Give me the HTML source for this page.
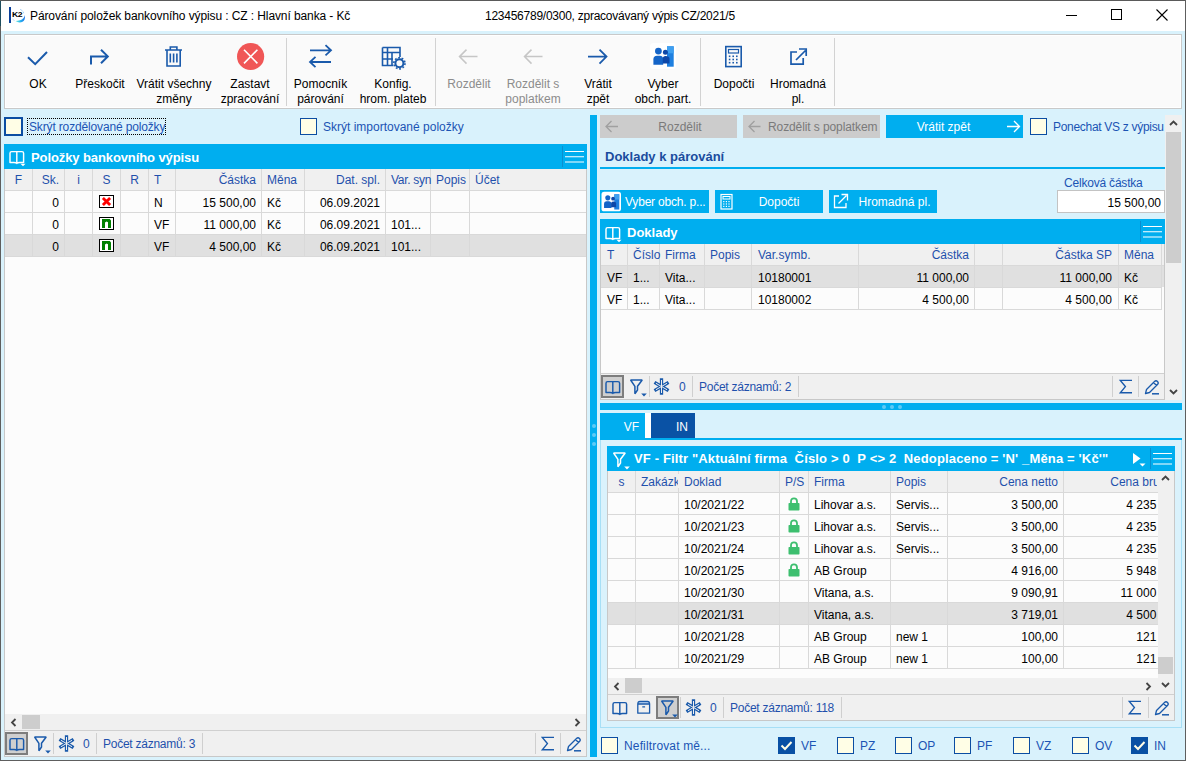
<!DOCTYPE html><html><head><meta charset="utf-8"><style>
*{box-sizing:border-box;margin:0;padding:0}
html,body{width:1186px;height:761px;overflow:hidden;background:#d9f2fc;font-family:"Liberation Sans",sans-serif;font-size:12px;color:#000}
.ab{position:absolute}
.t{position:absolute;white-space:nowrap;line-height:14px}
.c{text-align:center}
.r{text-align:right}
.hl{position:absolute;height:1px;background:#d6d6d6}
.vl{position:absolute;width:1px;background:#d6d6d6}
.cb{position:absolute;width:17px;height:17px;border:2px solid #0c4a9c;background:#fffde8}
.cbk{position:absolute;width:17px;height:17px;background:#0c4a9c}
svg{position:absolute;overflow:visible}
.bh{position:absolute;background:#00aeef;color:#fff;font-weight:bold;font-size:13px}
.gh{position:absolute;background:#f0f0f0;color:#1f4fa0}
.btn{position:absolute;background:#00aeef;color:#fff}
.gbtn{position:absolute;background:#cccccc;color:#7b7b7b}
</style></head><body><div class="ab" style="left:0;top:0;width:1186px;height:31px;background:#fff"></div><div class="ab" style="left:0;top:0;width:1186px;height:1px;background:#5a5a5a"></div><div class="ab" style="left:0;top:0;width:1px;height:761px;background:#5e5e5e"></div><div class="ab" style="left:0;top:1px;width:1px;height:25px;background:#1d4d5e"></div><div class="ab" style="left:1185px;top:0;width:1px;height:761px;background:#5e5e5e"></div><div class="ab" style="left:0;top:760px;width:1186px;height:1px;background:#5e5e5e"></div><div class="ab" style="left:9px;top:7px;width:2px;height:16px;background:#0a3f9a"></div><div class="t" style="left:12px;top:11px;font-size:7.5px;font-weight:bold;line-height:8px;letter-spacing:-0.4px;transform:scaleX(1.15);transform-origin:left">K2</div><svg style="left:0;top:0" width="1" height="1"><defs><linearGradient id="k2g" x1="0" y1="0" x2="1" y2="0"><stop offset="0" stop-color="#6ee8d8"/><stop offset="0.5" stop-color="#28b8f0"/><stop offset="1" stop-color="#1a6ee8"/></linearGradient></defs><path d="M15.5 21 Q19 23.5 23 21.5 Q25.3 20 25 15 Q24.2 19 20 20.2 Q17.5 20.8 15.5 21 Z" fill="url(#k2g)"/><path d="M20.5 9.5 Q23.5 11 23.8 14" stroke="#5aa8f0" stroke-width="0.9" stroke-dasharray="1 1" fill="none"/><path d="M12.5 19 Q13.5 20 14.5 20.5" stroke="#9ccff5" stroke-width="0.8" fill="none"/></svg><div class="t" style="left:30px;top:9px;font-size:12px;letter-spacing:-0.1px">Párování položek bankovního výpisu : CZ : Hlavní banka - Kč</div><div class="t" style="left:485px;top:9px;font-size:12px;letter-spacing:-0.25px">123456789/0300, zpracovávaný výpis CZ/2021/5</div><div class="ab" style="left:1066px;top:15px;width:11px;height:1px;background:#000"></div><div class="ab" style="left:1111px;top:9px;width:11px;height:11px;border:1px solid #000"></div><svg style="left:1156px;top:9px" width="12" height="12"><path d="M0.5 0.5 L11.5 11.5 M11.5 0.5 L0.5 11.5" stroke="#000" stroke-width="1.1"/></svg><div class="ab" style="left:4px;top:34px;width:1178px;height:75px;background:#fafafa;border:1px solid #c9c9c9;box-shadow:inset 0 0 0 1px #fff"></div><div class="ab" style="left:286px;top:38px;width:1px;height:68px;background:#d2d2d2"></div><div class="ab" style="left:435px;top:38px;width:1px;height:68px;background:#d2d2d2"></div><div class="ab" style="left:700px;top:38px;width:1px;height:68px;background:#d2d2d2"></div><div class="ab" style="left:834px;top:38px;width:1px;height:68px;background:#d2d2d2"></div><div class="t c" style="left:-22px;width:120px;top:77px;color:#000">OK</div><div class="t c" style="left:40px;width:120px;top:77px;color:#000">Přeskočit</div><div class="t c" style="left:114px;width:120px;top:77px;color:#000">Vrátit všechny</div><div class="t c" style="left:114px;width:120px;top:92px;color:#000">změny</div><div class="t c" style="left:190px;width:120px;top:77px;color:#000">Zastavt</div><div class="t c" style="left:190px;width:120px;top:92px;color:#000">zpracování</div><div class="t c" style="left:260.5px;width:120px;top:77px;color:#000">Pomocník</div><div class="t c" style="left:260.5px;width:120px;top:92px;color:#000">párování</div><div class="t c" style="left:333px;width:120px;top:77px;color:#000">Konfig.</div><div class="t c" style="left:333px;width:120px;top:92px;color:#000">hrom. plateb</div><div class="t c" style="left:409px;width:120px;top:77px;color:#8c8c8c">Rozdělit</div><div class="t c" style="left:473px;width:120px;top:77px;color:#8c8c8c">Rozdělit s</div><div class="t c" style="left:473px;width:120px;top:92px;color:#8c8c8c">poplatkem</div><div class="t c" style="left:538px;width:120px;top:77px;color:#000">Vrátit</div><div class="t c" style="left:538px;width:120px;top:92px;color:#000">zpět</div><div class="t c" style="left:603px;width:120px;top:77px;color:#000">Vyber</div><div class="t c" style="left:603px;width:120px;top:92px;color:#000">obch. part.</div><div class="t c" style="left:674px;width:120px;top:77px;color:#000">Dopočti</div><div class="t c" style="left:738px;width:120px;top:77px;color:#000">Hromadná</div><div class="t c" style="left:738px;width:120px;top:92px;color:#000">pl.</div><svg style="left:0;top:0" width="1" height="1"><path d="M28 57.3 L35.2 64.2 L47 52" stroke="#1a5aab" stroke-width="2" fill="none"/></svg><svg style="left:0;top:0" width="1" height="1"><path d="M91 64.5 L91 56.4 L108 56.4 M101 49.8 L107.8 56.4 L101 63.2" stroke="#1a5aab" stroke-width="2" fill="none"/></svg><svg style="left:0;top:0" width="1" height="1"><path d="M165 50 L182 50 M170.3 49.5 L170.3 47 L176.9 47 L176.9 49.5 M167 50 L167 66 L180.2 66 L180.2 50 M170.3 53.5 L170.3 62.5 M173.6 53.5 L173.6 62.5 M176.9 53.5 L176.9 62.5" stroke="#1a5aab" stroke-width="1.6" fill="none"/></svg><svg style="left:0;top:0" width="1" height="1"><circle cx="250.6" cy="56.5" r="13.6" fill="#f05656"/><path d="M244 49.8 L257.4 63.4 M257.4 49.8 L244 63.4" stroke="#fff" stroke-width="1.6"/></svg><svg style="left:0;top:0" width="1" height="1"><path d="M310 50.3 L331 50.3 M325.5 45.2 L331 50.3 L325.5 55.4 M310 62 L331 62 M315.5 56.9 L310 62 L315.5 67.1" stroke="#1a5aab" stroke-width="1.8" fill="none"/></svg><svg style="left:0;top:0" width="1" height="1"><path d="M382.5 47.5 L400 47.5 L400 57 M382.5 47.5 L382.5 65.5 L393 65.5 M382.5 52.5 L400 52.5 M382.5 59 L393 59 M387.5 47.5 L387.5 65.5 M392 52.5 L392 65.5" stroke="#1a5aab" stroke-width="1.6" fill="none"/><circle cx="399.4" cy="63.3" r="4" stroke="#1a5aab" stroke-width="2" fill="#fafafa"/><circle cx="399.4" cy="63.3" r="5.6" stroke="#1a5aab" stroke-width="1.6" stroke-dasharray="1.8 1.7" fill="none"/></svg><svg style="left:0;top:0" width="1" height="1"><path d="M477.5 56.6 L459.5 56.6 M466.5 49.6 L459.5 56.6 L466.5 63.6" stroke="#c6c6c6" stroke-width="1.5" fill="none"/></svg><svg style="left:0;top:0" width="1" height="1"><path d="M542.5 56.6 L524.5 56.6 M531.5 49.6 L524.5 56.6 L531.5 63.6" stroke="#c6c6c6" stroke-width="1.5" fill="none"/></svg><svg style="left:0;top:0" width="1" height="1"><path d="M588 56.6 L606.5 56.6 M599.5 49.6 L606.5 56.6 L599.5 63.6" stroke="#1a5aab" stroke-width="1.8" fill="none"/></svg><svg style="left:0;top:0" width="1" height="1"><g transform="translate(646,40) scale(1)"><rect x="4" y="3" width="26" height="26" rx="3.5" fill="#fff"/><rect x="21" y="6.3" width="6.7" height="20.4" fill="#1f80e0"/><rect x="21" y="6.3" width="6.7" height="7" fill="#3e9ff0"/><circle cx="12.4" cy="11.1" r="3.4" fill="#1565c8"/><path d="M7.4 24.8 L7.4 19.5 Q7.4 15.8 11 15.8 L13.8 15.8 Q17.2 15.8 17.2 19.5 L17.2 24.8 Z" fill="#1565c8"/><circle cx="19.4" cy="12.2" r="2.5" fill="#0d47a8"/><path d="M16.8 23.5 L16.8 18.8 Q16.8 16 19.5 16 Q23.5 16 23.5 18.8 L23.5 23.5 Z" fill="#0d47a8"/></g></svg><svg style="left:0;top:0" width="1" height="1"><rect x="725.8" y="46.6" width="15.4" height="20" stroke="#1a5aab" stroke-width="1.6" fill="none"/><rect x="728.5" y="49.5" width="10" height="3.5" stroke="#1a5aab" stroke-width="1.2" fill="none"/><rect x="728.8" y="55.5" width="1.6" height="1.6" fill="#1a5aab"/><rect x="728.8" y="58.7" width="1.6" height="1.6" fill="#1a5aab"/><rect x="728.8" y="61.9" width="1.6" height="1.6" fill="#1a5aab"/><rect x="732.4" y="55.5" width="1.6" height="1.6" fill="#1a5aab"/><rect x="732.4" y="58.7" width="1.6" height="1.6" fill="#1a5aab"/><rect x="732.4" y="61.9" width="1.6" height="1.6" fill="#1a5aab"/><rect x="736.0" y="55.5" width="1.6" height="1.6" fill="#1a5aab"/><rect x="736.0" y="58.7" width="1.6" height="1.6" fill="#1a5aab"/><rect x="736.0" y="61.9" width="1.6" height="1.6" fill="#1a5aab"/></svg><svg style="left:0;top:0" width="1" height="1"><path d="M797 52 L791 52 L791 64.2 L803.2 64.2 L803.2 58 M796 60 L805.5 50.5 M799 49 L806.2 49 L806.2 56" stroke="#1a5aab" stroke-width="1.7" fill="none"/></svg><div class="ab" style="left:4px;top:117px;width:19px;height:19px;border:2px solid #0b4da2;background:#fffee6"></div><div class="ab" style="left:27px;top:118px;width:139px;height:17px;border:1px dotted #000"></div><div class="t" style="left:29px;top:120px;color:#1b54b4;letter-spacing:-0.15px">Skrýt rozdělované položky</div><div class="ab" style="left:300px;top:118px;width:17px;height:17px;border:1px solid #0b4da2;background:#fffee6"></div><div class="t" style="left:323px;top:120px;color:#1b54b4">Skrýt importované položky</div><div class="ab" style="left:4px;top:144px;width:583px;height:613px;background:#fcfcfc;border:1px solid #c8c8c8;border-top:none"></div><div class="ab" style="left:4px;top:144px;width:583px;height:25px;background:#00aeef"></div><svg style="left:9px;top:150px" width="16" height="14"><path d="M7.8 13.2 L7.8 1.6 M7.8 1.6 L2.6 1.6 Q1 1.6 1 3.2 L1 12.4 L5 12.4 Q7 12.4 7.8 13.4 Q8.6 12.4 10.6 12.4 L14.6 12.4 L14.6 3.2 Q14.6 1.6 13 1.6 L7.8 1.6" stroke="#fff" stroke-width="1.45" fill="none" stroke-linejoin="round"/><path d="M11.5 13.8 L16.5 13.8 L14 16.3 Z" fill="#fff"/></svg><div class="t" style="left:31px;top:151px;color:#fff;font-weight:bold;font-size:13px;letter-spacing:-0.1px">Položky bankovního výpisu</div><div class="ab" style="left:562px;top:146px;width:1px;height:21px;background:#0a8fd0"></div><svg style="left:565px;top:150px" width="20" height="14"><path d="M0 1.5 L19 1.5 M0 6.75 L19 6.75 M0 12 L19 12" stroke="#fff" stroke-width="1.2"/></svg><div class="ab" style="left:5px;top:169px;width:581px;height:21px;background:#f0f0f0"></div><div class="ab" style="left:5px;top:190px;width:581px;height:1px;background:#d9d9d9"></div><div class="ab" style="left:5px;top:235px;width:581px;height:21px;background:#e0e0e0"></div><div class="ab" style="left:5px;top:212px;width:581px;height:1px;background:#d9d9d9"></div><div class="ab" style="left:5px;top:234px;width:581px;height:1px;background:#d9d9d9"></div><div class="ab" style="left:5px;top:256px;width:581px;height:1px;background:#d9d9d9"></div><div class="ab" style="left:32px;top:169px;width:1px;height:88px;background:#d9d9d9"></div><div class="ab" style="left:64px;top:169px;width:1px;height:88px;background:#d9d9d9"></div><div class="ab" style="left:92px;top:169px;width:1px;height:88px;background:#d9d9d9"></div><div class="ab" style="left:120px;top:169px;width:1px;height:88px;background:#d9d9d9"></div><div class="ab" style="left:148px;top:169px;width:1px;height:88px;background:#d9d9d9"></div><div class="ab" style="left:175px;top:169px;width:1px;height:88px;background:#d9d9d9"></div><div class="ab" style="left:261px;top:169px;width:1px;height:88px;background:#d9d9d9"></div><div class="ab" style="left:304px;top:169px;width:1px;height:88px;background:#d9d9d9"></div><div class="ab" style="left:385px;top:169px;width:1px;height:88px;background:#d9d9d9"></div><div class="ab" style="left:430px;top:169px;width:1px;height:88px;background:#d9d9d9"></div><div class="ab" style="left:469px;top:169px;width:1px;height:88px;background:#d9d9d9"></div><div class="t" style="left:5px;top:173px;width:27px;text-align:center;color:#1f50ac">F</div><div class="t" style="left:33px;top:173px;width:26px;text-align:right;color:#1f50ac">Sk.</div><div class="t" style="left:65px;top:173px;width:27px;text-align:center;color:#1f50ac">i</div><div class="t" style="left:93px;top:173px;width:27px;text-align:center;color:#1f50ac">S</div><div class="t" style="left:121px;top:173px;width:27px;text-align:center;color:#1f50ac">R</div><div class="t" style="left:154px;top:173px;color:#1f50ac">T</div><div class="t" style="left:176px;top:173px;width:80px;text-align:right;color:#1f50ac">Částka</div><div class="t" style="left:267px;top:173px;color:#1f50ac">Měna</div><div class="t" style="left:304px;top:173px;width:76px;text-align:right;color:#1f50ac">Dat. spl.</div><div class="t" style="left:391px;top:173px;color:#1f50ac;letter-spacing:-0.3px">Var. syn</div><div class="t" style="left:436px;top:173px;color:#1f50ac">Popis</div><div class="t" style="left:475px;top:173px;color:#1f50ac">Účet</div><div class="t" style="left:33px;top:196px;width:26px;text-align:right;">0</div><div class="ab" style="left:99px;top:195px;width:15px;height:13px;border:1px solid #000;background:#fff"></div><svg style="left:99px;top:195px" width="15" height="13"><path d="M3.9 2.9 L11.1 10.1 M11.1 2.9 L3.9 10.1" stroke="#ff0000" stroke-width="2.8"/></svg><div class="t" style="left:154px;top:196px;">N</div><div class="t" style="left:176px;top:196px;width:80px;text-align:right;">15 500,00</div><div class="t" style="left:267px;top:196px;">Kč</div><div class="t" style="left:304px;top:196px;width:76px;text-align:right;">06.09.2021</div><div class="t" style="left:391px;top:196px;"></div><div class="t" style="left:33px;top:218px;width:26px;text-align:right;">0</div><div class="ab" style="left:99px;top:217px;width:15px;height:13px;border:1px solid #000;background:#fff"></div><svg style="left:99px;top:217px" width="15" height="13"><path d="M3 2 L10.8 2 L12 3.4 L12 11 L9 11 L9 5.3 L7.6 4.6 L6 5.6 L6 11 L3 11 Z" fill="#008000"/></svg><div class="t" style="left:154px;top:218px;">VF</div><div class="t" style="left:176px;top:218px;width:80px;text-align:right;">11 000,00</div><div class="t" style="left:267px;top:218px;">Kč</div><div class="t" style="left:304px;top:218px;width:76px;text-align:right;">06.09.2021</div><div class="t" style="left:391px;top:218px;">101...</div><div class="t" style="left:33px;top:240px;width:26px;text-align:right;">0</div><div class="ab" style="left:99px;top:239px;width:15px;height:13px;border:1px solid #000;background:#fff"></div><svg style="left:99px;top:239px" width="15" height="13"><path d="M3 2 L10.8 2 L12 3.4 L12 11 L9 11 L9 5.3 L7.6 4.6 L6 5.6 L6 11 L3 11 Z" fill="#008000"/></svg><div class="t" style="left:154px;top:240px;">VF</div><div class="t" style="left:176px;top:240px;width:80px;text-align:right;">4 500,00</div><div class="t" style="left:267px;top:240px;">Kč</div><div class="t" style="left:304px;top:240px;width:76px;text-align:right;">06.09.2021</div><div class="t" style="left:391px;top:240px;">101...</div><div class="ab" style="left:5px;top:714px;width:581px;height:16px;background:#f0f0f0"></div><div class="ab" style="left:22px;top:715px;width:18px;height:14px;background:#cdcdcd"></div><svg style="left:10px;top:718px" width="7" height="9"><path d="M5.5 1 L2 4.5 L5.5 8" stroke="#444" stroke-width="1.8" fill="none"/></svg><svg style="left:574px;top:718px" width="7" height="9"><path d="M1.5 1 L5 4.5 L1.5 8" stroke="#444" stroke-width="1.8" fill="none"/></svg><div class="ab" style="left:5px;top:730px;width:581px;height:1px;background:#d0d0d0"></div><div class="ab" style="left:5px;top:731px;width:581px;height:25px;background:#f0f0f0"></div><div class="ab" style="left:5px;top:732px;width:23px;height:23px;background:#cfcfcf;border:2px solid #7d7d7d"></div><svg style="left:9px;top:737px" width="16" height="14"><path d="M7.8 13.2 L7.8 1.6 M7.8 1.6 L2.6 1.6 Q1 1.6 1 3.2 L1 12.4 L5 12.4 Q7 12.4 7.8 13.4 Q8.6 12.4 10.6 12.4 L14.6 12.4 L14.6 3.2 Q14.6 1.6 13 1.6 L7.8 1.6" stroke="#1a5aab" stroke-width="1.45" fill="none" stroke-linejoin="round"/></svg><svg style="left:33px;top:735px" width="18" height="19"><path d="M1.6 2 L13.2 2 L8.5 8.3 L8.5 12 L5.9 15.8 L5.9 8.3 Z" stroke="#1a5aab" stroke-width="1.5" fill="none" stroke-linejoin="bevel"/><path d="M12.2 15.5 L17.8 15.5 L15 18.5 Z" fill="#1a5aab"/></svg><div class="ab" style="left:53px;top:733px;width:1px;height:21px;background:#cfcfcf"></div><svg style="left:58px;top:735px" width="17" height="17"><path d="M8.5 2 L8.5 15 M2.9 5.25 L14.1 11.75 M14.1 5.25 L2.9 11.75" stroke="#1a5aab" stroke-width="3.3" stroke-linecap="square" fill="none"/><path d="M8.5 2 L8.5 15 M2.9 5.25 L14.1 11.75 M14.1 5.25 L2.9 11.75" stroke="#f0f0f0" stroke-width="1.0" stroke-linecap="butt" fill="none"/></svg><div class="t" style="left:83px;top:737px;color:#1f50ac">0</div><div class="ab" style="left:96px;top:733px;width:1px;height:21px;background:#cfcfcf"></div><div class="t" style="left:103px;top:737px;color:#1f50ac;letter-spacing:-0.25px">Počet záznamů: 3</div><div class="ab" style="left:202px;top:733px;width:1px;height:21px;background:#cfcfcf"></div><div class="ab" style="left:535px;top:733px;width:1px;height:21px;background:#cfcfcf"></div><svg style="left:541px;top:736px" width="14" height="16"><path d="M13 1.4 L1.3 1.4 L6.4 7.6 L1.3 13.8 L13 13.8" stroke="#1a5aab" stroke-width="1.4" fill="none"/></svg><div class="ab" style="left:560px;top:733px;width:1px;height:21px;background:#cfcfcf"></div><svg style="left:566px;top:736px" width="16" height="16"><path d="M1.5 14.5 L2.5 10.5 L10.5 2.5 Q12 1 13.5 2.5 Q15 4 13.5 5.5 L5.5 13.5 Z M9.5 3.5 L12.5 6.5" stroke="#1a5aab" stroke-width="1.3" fill="none" stroke-linejoin="round"/><path d="M8 14.8 L15 14.8" stroke="#1a5aab" stroke-width="1.5"/></svg><div class="ab" style="left:590px;top:115px;width:7px;height:642px;background:#00aeef"></div><div class="ab" style="left:600px;top:115px;width:137px;height:23px;background:#cccccc"></div><svg style="left:0;top:0" width="1" height="1"><path d="M618 126.5 L606 126.5 M611.5 121 L606 126.5 L611.5 132" stroke="#a0a0a0" stroke-width="1.3" fill="none"/></svg><div class="t" style="left:620px;top:120px;width:120px;text-align:center;color:#7a7a7a">Rozdělit</div><div class="ab" style="left:743px;top:115px;width:137px;height:23px;background:#cccccc"></div><svg style="left:0;top:0" width="1" height="1"><path d="M760.5 126.5 L749 126.5 M754.5 121 L749 126.5 L754.5 132" stroke="#a0a0a0" stroke-width="1.3" fill="none"/></svg><div class="t" style="left:768px;top:120px;color:#7a7a7a;letter-spacing:-0.1px">Rozdělit s poplatkem</div><div class="ab" style="left:886px;top:115px;width:137px;height:23px;background:#00aeef"></div><div class="t" style="left:886px;top:120px;width:115px;text-align:center;color:#fff">Vrátit zpět</div><svg style="left:0;top:0" width="1" height="1"><path d="M1007 126.5 L1019.5 126.5 M1014 121 L1019.5 126.5 L1014 132" stroke="#fff" stroke-width="1.3" fill="none"/></svg><div class="ab" style="left:1030px;top:118px;width:17px;height:17px;border:1px solid #0b4da2;background:#fffee6"></div><div class="t" style="left:1053px;top:120px;color:#1b54b4;letter-spacing:-0.3px">Ponechat VS z výpisu</div><div class="t" style="left:605px;top:150px;color:#1b4c9e;font-weight:bold;font-size:13px">Doklady k párování</div><div class="ab" style="left:600px;top:167px;width:565px;height:2px;background:#00aeef"></div><div class="ab" style="left:600px;top:190px;width:109px;height:23px;background:#00aeef"></div><svg style="left:0;top:0" width="1" height="1"><g transform="translate(598.5,189.5) scale(0.75)"><rect x="4" y="3" width="26" height="26" rx="3.5" fill="#fff"/><rect x="21" y="6.3" width="6.7" height="20.4" fill="#1f80e0"/><rect x="21" y="6.3" width="6.7" height="7" fill="#3e9ff0"/><circle cx="12.4" cy="11.1" r="3.4" fill="#1565c8"/><path d="M7.4 24.8 L7.4 19.5 Q7.4 15.8 11 15.8 L13.8 15.8 Q17.2 15.8 17.2 19.5 L17.2 24.8 Z" fill="#1565c8"/><circle cx="19.4" cy="12.2" r="2.5" fill="#0d47a8"/><path d="M16.8 23.5 L16.8 18.8 Q16.8 16 19.5 16 Q23.5 16 23.5 18.8 L23.5 23.5 Z" fill="#0d47a8"/></g></svg><div class="t" style="left:625px;top:195px;color:#fff;letter-spacing:-0.2px">Vyber obch. p...</div><div class="ab" style="left:715px;top:190px;width:108px;height:23px;background:#00aeef"></div><svg style="left:0;top:0" width="1" height="1"><rect x="721" y="194.5" width="11" height="14.5" stroke="#fff" stroke-width="1.2" fill="none"/><rect x="723" y="196.5" width="7" height="2.5" stroke="#fff" stroke-width="1" fill="none"/><rect x="723.2" y="201.0" width="1.2" height="1.2" fill="#fff"/><rect x="723.2" y="203.4" width="1.2" height="1.2" fill="#fff"/><rect x="723.2" y="205.8" width="1.2" height="1.2" fill="#fff"/><rect x="725.8000000000001" y="201.0" width="1.2" height="1.2" fill="#fff"/><rect x="725.8000000000001" y="203.4" width="1.2" height="1.2" fill="#fff"/><rect x="725.8000000000001" y="205.8" width="1.2" height="1.2" fill="#fff"/><rect x="728.4000000000001" y="201.0" width="1.2" height="1.2" fill="#fff"/><rect x="728.4000000000001" y="203.4" width="1.2" height="1.2" fill="#fff"/><rect x="728.4000000000001" y="205.8" width="1.2" height="1.2" fill="#fff"/></svg><div class="t" style="left:735px;top:195px;width:88px;text-align:center;color:#fff">Dopočti</div><div class="ab" style="left:829px;top:190px;width:108px;height:23px;background:#00aeef"></div><svg style="left:0;top:0" width="1" height="1"><path d="M839 196 L834.5 196 L834.5 207.5 L846 207.5 L846 203 M838.5 203.5 L846.5 195.5 M841.5 194.5 L847.5 194.5 L847.5 200.5" stroke="#fff" stroke-width="1.3" fill="none"/></svg><div class="t" style="left:852px;top:195px;width:85px;text-align:center;color:#fff">Hromadná pl.</div><div class="t" style="left:1064px;top:176px;color:#1b54b4;letter-spacing:-0.2px">Celková částka</div><div class="ab" style="left:1057px;top:190px;width:108px;height:23px;background:#fff;border:1px solid #c3c3c3"></div><div class="t" style="left:1057px;top:196px;width:104px;text-align:right;">15 500,00</div><div class="ab" style="left:600px;top:219px;width:565px;height:181px;background:#fcfcfc;border:1px solid #c8c8c8;border-top:none"></div><div class="ab" style="left:600px;top:219px;width:565px;height:25px;background:#00aeef"></div><svg style="left:605px;top:226px" width="16" height="14"><path d="M7.8 13.2 L7.8 1.6 M7.8 1.6 L2.6 1.6 Q1 1.6 1 3.2 L1 12.4 L5 12.4 Q7 12.4 7.8 13.4 Q8.6 12.4 10.6 12.4 L14.6 12.4 L14.6 3.2 Q14.6 1.6 13 1.6 L7.8 1.6" stroke="#fff" stroke-width="1.45" fill="none" stroke-linejoin="round"/><path d="M11.5 13.8 L16.5 13.8 L14 16.3 Z" fill="#fff"/></svg><div class="t" style="left:627px;top:226px;color:#fff;font-weight:bold;font-size:13px">Doklady</div><div class="ab" style="left:1140px;top:221px;width:1px;height:21px;background:#0a8fd0"></div><svg style="left:1143px;top:225px" width="20" height="14"><path d="M0 1.5 L19 1.5 M0 6.75 L19 6.75 M0 12 L19 12" stroke="#fff" stroke-width="1.2"/></svg><div class="ab" style="left:601px;top:244px;width:563px;height:21px;background:#f0f0f0"></div><div class="ab" style="left:601px;top:265px;width:563px;height:1px;background:#d9d9d9"></div><div class="ab" style="left:601px;top:266px;width:563px;height:21px;background:#e0e0e0"></div><div class="ab" style="left:601px;top:287px;width:561px;height:1px;background:#d9d9d9"></div><div class="ab" style="left:601px;top:309px;width:561px;height:1px;background:#d9d9d9"></div><div class="ab" style="left:627px;top:244px;width:1px;height:66px;background:#d9d9d9"></div><div class="ab" style="left:659px;top:244px;width:1px;height:66px;background:#d9d9d9"></div><div class="ab" style="left:704px;top:244px;width:1px;height:66px;background:#d9d9d9"></div><div class="ab" style="left:751px;top:244px;width:1px;height:66px;background:#d9d9d9"></div><div class="ab" style="left:858px;top:244px;width:1px;height:66px;background:#d9d9d9"></div><div class="ab" style="left:974px;top:244px;width:1px;height:66px;background:#d9d9d9"></div><div class="ab" style="left:1002px;top:244px;width:1px;height:66px;background:#d9d9d9"></div><div class="ab" style="left:1118px;top:244px;width:1px;height:66px;background:#d9d9d9"></div><div class="ab" style="left:1161px;top:244px;width:1px;height:66px;background:#d9d9d9"></div><div class="t" style="left:607px;top:248px;color:#1f50ac">T</div><div class="t" style="left:633px;top:248px;color:#1f50ac">Číslo</div><div class="t" style="left:665px;top:248px;color:#1f50ac">Firma</div><div class="t" style="left:710px;top:248px;color:#1f50ac">Popis</div><div class="t" style="left:758px;top:248px;color:#1f50ac">Var.symb.</div><div class="t" style="left:1124px;top:248px;color:#1f50ac">Měna</div><div class="t" style="left:858px;top:248px;width:111px;text-align:right;color:#1f50ac">Částka</div><div class="t" style="left:1002px;top:248px;width:110px;text-align:right;color:#1f50ac">Částka SP</div><div class="t" style="left:607px;top:271px;">VF</div><div class="t" style="left:633px;top:271px;">1...</div><div class="t" style="left:665px;top:271px;">Vita...</div><div class="t" style="left:758px;top:271px;">10180001</div><div class="t" style="left:858px;top:271px;width:111px;text-align:right;">11 000,00</div><div class="t" style="left:1002px;top:271px;width:110px;text-align:right;">11 000,00</div><div class="t" style="left:1124px;top:271px;">Kč</div><div class="t" style="left:607px;top:293px;">VF</div><div class="t" style="left:633px;top:293px;">1...</div><div class="t" style="left:665px;top:293px;">Vita...</div><div class="t" style="left:758px;top:293px;">10180002</div><div class="t" style="left:858px;top:293px;width:111px;text-align:right;">4 500,00</div><div class="t" style="left:1002px;top:293px;width:110px;text-align:right;">4 500,00</div><div class="t" style="left:1124px;top:293px;">Kč</div><div class="ab" style="left:601px;top:373px;width:563px;height:1px;background:#d0d0d0"></div><div class="ab" style="left:601px;top:374px;width:563px;height:25px;background:#f0f0f0"></div><div class="ab" style="left:601px;top:375px;width:23px;height:23px;background:#cfcfcf;border:2px solid #7d7d7d"></div><svg style="left:605px;top:380px" width="16" height="14"><path d="M7.8 13.2 L7.8 1.6 M7.8 1.6 L2.6 1.6 Q1 1.6 1 3.2 L1 12.4 L5 12.4 Q7 12.4 7.8 13.4 Q8.6 12.4 10.6 12.4 L14.6 12.4 L14.6 3.2 Q14.6 1.6 13 1.6 L7.8 1.6" stroke="#1a5aab" stroke-width="1.45" fill="none" stroke-linejoin="round"/></svg><svg style="left:629px;top:378px" width="18" height="19"><path d="M1.6 2 L13.2 2 L8.5 8.3 L8.5 12 L5.9 15.8 L5.9 8.3 Z" stroke="#1a5aab" stroke-width="1.5" fill="none" stroke-linejoin="bevel"/><path d="M12.2 15.5 L17.8 15.5 L15 18.5 Z" fill="#1a5aab"/></svg><div class="ab" style="left:649px;top:376px;width:1px;height:21px;background:#cfcfcf"></div><svg style="left:653px;top:378px" width="17" height="17"><path d="M8.5 2 L8.5 15 M2.9 5.25 L14.1 11.75 M14.1 5.25 L2.9 11.75" stroke="#1a5aab" stroke-width="3.3" stroke-linecap="square" fill="none"/><path d="M8.5 2 L8.5 15 M2.9 5.25 L14.1 11.75 M14.1 5.25 L2.9 11.75" stroke="#f0f0f0" stroke-width="1.0" stroke-linecap="butt" fill="none"/></svg><div class="t" style="left:679px;top:380px;color:#1f50ac">0</div><div class="ab" style="left:692px;top:376px;width:1px;height:21px;background:#cfcfcf"></div><div class="t" style="left:699px;top:380px;color:#1f50ac;letter-spacing:-0.25px">Počet záznamů: 2</div><div class="ab" style="left:798px;top:376px;width:1px;height:21px;background:#cfcfcf"></div><div class="ab" style="left:1112px;top:376px;width:1px;height:21px;background:#cfcfcf"></div><svg style="left:1119px;top:379px" width="14" height="16"><path d="M13 1.4 L1.3 1.4 L6.4 7.6 L1.3 13.8 L13 13.8" stroke="#1a5aab" stroke-width="1.4" fill="none"/></svg><div class="ab" style="left:1138px;top:376px;width:1px;height:21px;background:#cfcfcf"></div><svg style="left:1144px;top:379px" width="16" height="16"><path d="M1.5 14.5 L2.5 10.5 L10.5 2.5 Q12 1 13.5 2.5 Q15 4 13.5 5.5 L5.5 13.5 Z M9.5 3.5 L12.5 6.5" stroke="#1a5aab" stroke-width="1.3" fill="none" stroke-linejoin="round"/><path d="M8 14.8 L15 14.8" stroke="#1a5aab" stroke-width="1.5"/></svg><div class="ab" style="left:1165px;top:115px;width:17px;height:285px;background:#f0f0f0"></div><div class="ab" style="left:1166px;top:132px;width:15px;height:131px;background:#cdcdcd"></div><svg style="left:1169px;top:120px" width="9" height="6"><path d="M1 5 L4.5 1.5 L8 5" stroke="#444" stroke-width="1.8" fill="none"/></svg><svg style="left:1169px;top:389px" width="9" height="6"><path d="M1 1 L4.5 4.5 L8 1" stroke="#444" stroke-width="1.8" fill="none"/></svg><div class="ab" style="left:600px;top:403px;width:582px;height:7px;background:#00aeef"></div><div class="ab" style="left:882px;top:405px;width:4px;height:4px;border-radius:50%;background:#5ccaf6"></div><div class="ab" style="left:890px;top:405px;width:4px;height:4px;border-radius:50%;background:#5ccaf6"></div><div class="ab" style="left:898px;top:405px;width:4px;height:4px;border-radius:50%;background:#5ccaf6"></div><div class="ab" style="left:592px;top:424px;width:4px;height:4px;border-radius:50%;background:#5ccaf6"></div><div class="ab" style="left:592px;top:433px;width:4px;height:4px;border-radius:50%;background:#5ccaf6"></div><div class="ab" style="left:592px;top:442px;width:4px;height:4px;border-radius:50%;background:#5ccaf6"></div><div class="ab" style="left:600px;top:413px;width:45px;height:25px;background:#00aeef"></div><div class="t" style="left:600px;top:420px;width:39px;text-align:right;color:#fff">VF</div><div class="ab" style="left:645px;top:413px;width:6px;height:25px;background:#fff"></div><div class="ab" style="left:651px;top:413px;width:44px;height:25px;background:#0a52a5"></div><div class="t" style="left:651px;top:420px;width:37px;text-align:right;color:#fff">IN</div><div class="ab" style="left:600px;top:438px;width:582px;height:2px;background:#00aeef"></div><div class="ab" style="left:600px;top:440px;width:582px;height:288px;border:1px solid #a6dff6;border-top:none;background:#daf2fc"></div><div class="ab" style="left:607px;top:446px;width:568px;height:275px;background:#fcfcfc;border:1px solid #c8c8c8;border-top:none"></div><div class="ab" style="left:607px;top:446px;width:568px;height:25px;background:#00aeef"></div><svg style="left:612px;top:451px" width="18" height="19"><path d="M1.6 2 L13.2 2 L8.5 8.3 L8.5 12 L5.9 15.8 L5.9 8.3 Z" stroke="#fff" stroke-width="1.5" fill="none" stroke-linejoin="bevel"/><path d="M12.2 15.5 L17.8 15.5 L15 18.5 Z" fill="#fff"/></svg><div class="t" style="left:634px;top:452px;color:#fff;font-weight:bold;font-size:13px;white-space:pre;letter-spacing:0.15px">VF - Filtr "Aktuální firma  Číslo &gt; 0  P &lt;&gt; 2  Nedoplaceno = 'N' _Měna = 'Kč'"</div><svg style="left:0;top:0" width="1" height="1"><path d="M1133 453 L1140.5 458.5 L1133 464 Z" fill="#fff"/><path d="M1139.5 463.5 L1145.5 463.5 L1142.5 466.5 Z" fill="#fff"/></svg><div class="ab" style="left:1150px;top:448px;width:1px;height:21px;background:#0a8fd0"></div><svg style="left:1153px;top:452px" width="20" height="14"><path d="M0 1.5 L19 1.5 M0 6.75 L19 6.75 M0 12 L19 12" stroke="#fff" stroke-width="1.2"/></svg><div class="ab" style="left:608px;top:471px;width:550px;height:21px;background:#f0f0f0"></div><div class="ab" style="left:608px;top:492px;width:550px;height:1px;background:#d9d9d9"></div><div class="ab" style="left:608px;top:603px;width:550px;height:21px;background:#e0e0e0"></div><div class="ab" style="left:608px;top:514px;width:550px;height:1px;background:#d9d9d9"></div><div class="ab" style="left:608px;top:536px;width:550px;height:1px;background:#d9d9d9"></div><div class="ab" style="left:608px;top:558px;width:550px;height:1px;background:#d9d9d9"></div><div class="ab" style="left:608px;top:580px;width:550px;height:1px;background:#d9d9d9"></div><div class="ab" style="left:608px;top:602px;width:550px;height:1px;background:#d9d9d9"></div><div class="ab" style="left:608px;top:624px;width:550px;height:1px;background:#d9d9d9"></div><div class="ab" style="left:608px;top:646px;width:550px;height:1px;background:#d9d9d9"></div><div class="ab" style="left:608px;top:668px;width:550px;height:1px;background:#d9d9d9"></div><div class="ab" style="left:635px;top:471px;width:1px;height:198px;background:#d9d9d9"></div><div class="ab" style="left:779px;top:471px;width:1px;height:198px;background:#d9d9d9"></div><div class="ab" style="left:808px;top:471px;width:1px;height:198px;background:#d9d9d9"></div><div class="ab" style="left:890px;top:471px;width:1px;height:198px;background:#d9d9d9"></div><div class="ab" style="left:947px;top:471px;width:1px;height:198px;background:#d9d9d9"></div><div class="ab" style="left:1063px;top:471px;width:1px;height:198px;background:#d9d9d9"></div><div class="ab" style="left:678px;top:492px;width:1px;height:177px;background:#d9d9d9"></div><div class="t" style="left:608px;top:475px;width:27px;text-align:center;color:#1f50ac">s</div><div class="ab" style="left:636px;top:471px;width:42px;height:21px;overflow:hidden;background:#f0f0f0"><div class="t" style="left:5px;top:4px;color:#1f50ac">Zakázka</div></div><div class="ab" style="left:678px;top:471px;width:1px;height:3px;background:#d9d9d9"></div><div class="ab" style="left:678px;top:488px;width:1px;height:4px;background:#d9d9d9"></div><div class="ab" style="left:608px;top:440px;width:549px;height:229px;overflow:hidden"><div class="t" style="left:76px;top:35px;color:#1f50ac">Doklad</div><div class="t" style="left:177px;top:35px;color:#1f50ac">P/S</div><div class="t" style="left:206px;top:35px;color:#1f50ac">Firma</div><div class="t" style="left:288px;top:35px;color:#1f50ac">Popis</div><div class="t" style="left:339px;top:35px;width:111px;text-align:right;color:#1f50ac">Cena netto</div><div class="t" style="left:455px;top:35px;width:110px;text-align:right;color:#1f50ac">Cena brutto</div><div class="t" style="left:76px;top:58px;">10/2021/22</div><svg style="left:180px;top:57px" width="12" height="14"><path d="M3 6.5 L3 4.5 Q3 1.3 6 1.3 Q9 1.3 9 4.5 L9 6.5" stroke="#3dbf6f" stroke-width="1.8" fill="none"/><rect x="0.5" y="6" width="11" height="7.5" rx="0.8" fill="#3dbf6f"/></svg><div class="t" style="left:206px;top:58px;">Lihovar a.s.</div><div class="t" style="left:288px;top:58px;">Servis...</div><div class="t" style="left:339px;top:58px;width:111px;text-align:right;">3 500,00</div><div class="t" style="left:455px;top:58px;width:110px;text-align:right;">4 235,00</div><div class="t" style="left:76px;top:80px;">10/2021/23</div><svg style="left:180px;top:79px" width="12" height="14"><path d="M3 6.5 L3 4.5 Q3 1.3 6 1.3 Q9 1.3 9 4.5 L9 6.5" stroke="#3dbf6f" stroke-width="1.8" fill="none"/><rect x="0.5" y="6" width="11" height="7.5" rx="0.8" fill="#3dbf6f"/></svg><div class="t" style="left:206px;top:80px;">Lihovar a.s.</div><div class="t" style="left:288px;top:80px;">Servis...</div><div class="t" style="left:339px;top:80px;width:111px;text-align:right;">3 500,00</div><div class="t" style="left:455px;top:80px;width:110px;text-align:right;">4 235,00</div><div class="t" style="left:76px;top:102px;">10/2021/24</div><svg style="left:180px;top:101px" width="12" height="14"><path d="M3 6.5 L3 4.5 Q3 1.3 6 1.3 Q9 1.3 9 4.5 L9 6.5" stroke="#3dbf6f" stroke-width="1.8" fill="none"/><rect x="0.5" y="6" width="11" height="7.5" rx="0.8" fill="#3dbf6f"/></svg><div class="t" style="left:206px;top:102px;">Lihovar a.s.</div><div class="t" style="left:288px;top:102px;">Servis...</div><div class="t" style="left:339px;top:102px;width:111px;text-align:right;">3 500,00</div><div class="t" style="left:455px;top:102px;width:110px;text-align:right;">4 235,00</div><div class="t" style="left:76px;top:124px;">10/2021/25</div><svg style="left:180px;top:123px" width="12" height="14"><path d="M3 6.5 L3 4.5 Q3 1.3 6 1.3 Q9 1.3 9 4.5 L9 6.5" stroke="#3dbf6f" stroke-width="1.8" fill="none"/><rect x="0.5" y="6" width="11" height="7.5" rx="0.8" fill="#3dbf6f"/></svg><div class="t" style="left:206px;top:124px;">AB Group</div><div class="t" style="left:288px;top:124px;"></div><div class="t" style="left:339px;top:124px;width:111px;text-align:right;">4 916,00</div><div class="t" style="left:455px;top:124px;width:110px;text-align:right;">5 948,00</div><div class="t" style="left:76px;top:146px;">10/2021/30</div><div class="t" style="left:206px;top:146px;">Vitana, a.s.</div><div class="t" style="left:288px;top:146px;"></div><div class="t" style="left:339px;top:146px;width:111px;text-align:right;">9 090,91</div><div class="t" style="left:455px;top:146px;width:110px;text-align:right;">11 000,00</div><div class="t" style="left:76px;top:168px;">10/2021/31</div><div class="t" style="left:206px;top:168px;">Vitana, a.s.</div><div class="t" style="left:288px;top:168px;"></div><div class="t" style="left:339px;top:168px;width:111px;text-align:right;">3 719,01</div><div class="t" style="left:455px;top:168px;width:110px;text-align:right;">4 500,00</div><div class="t" style="left:76px;top:190px;">10/2021/28</div><div class="t" style="left:206px;top:190px;">AB Group</div><div class="t" style="left:288px;top:190px;">new 1</div><div class="t" style="left:339px;top:190px;width:111px;text-align:right;">100,00</div><div class="t" style="left:455px;top:190px;width:110px;text-align:right;">121,00</div><div class="t" style="left:76px;top:212px;">10/2021/29</div><div class="t" style="left:206px;top:212px;">AB Group</div><div class="t" style="left:288px;top:212px;">new 1</div><div class="t" style="left:339px;top:212px;width:111px;text-align:right;">100,00</div><div class="t" style="left:455px;top:212px;width:110px;text-align:right;">121,00</div></div><div class="ab" style="left:1158px;top:471px;width:16px;height:223px;background:#f0f0f0"></div><div class="ab" style="left:1158px;top:657px;width:15px;height:17px;background:#cdcdcd"></div><svg style="left:1161px;top:475px" width="9" height="6"><path d="M1 5 L4.5 1.5 L8 5" stroke="#444" stroke-width="1.8" fill="none"/></svg><svg style="left:1161px;top:682px" width="9" height="6"><path d="M1 1 L4.5 4.5 L8 1" stroke="#444" stroke-width="1.8" fill="none"/></svg><div class="ab" style="left:608px;top:678px;width:550px;height:16px;background:#f0f0f0"></div><div class="ab" style="left:625px;top:678px;width:17px;height:15px;background:#cdcdcd"></div><svg style="left:613px;top:682px" width="7" height="9"><path d="M5.5 1 L2 4.5 L5.5 8" stroke="#444" stroke-width="1.8" fill="none"/></svg><svg style="left:1145px;top:682px" width="7" height="9"><path d="M1.5 1 L5 4.5 L1.5 8" stroke="#444" stroke-width="1.8" fill="none"/></svg><div class="ab" style="left:608px;top:694px;width:566px;height:1px;background:#d0d0d0"></div><div class="ab" style="left:608px;top:695px;width:566px;height:25px;background:#f0f0f0"></div><svg style="left:612px;top:701px" width="16" height="14"><path d="M7.8 13.2 L7.8 1.6 M7.8 1.6 L2.6 1.6 Q1 1.6 1 3.2 L1 12.4 L5 12.4 Q7 12.4 7.8 13.4 Q8.6 12.4 10.6 12.4 L14.6 12.4 L14.6 3.2 Q14.6 1.6 13 1.6 L7.8 1.6" stroke="#1a5aab" stroke-width="1.45" fill="none" stroke-linejoin="round"/></svg><svg style="left:637px;top:700px" width="14" height="15"><path d="M1.5 3.5 L12.5 3.5 L11.5 1.5 L2.5 1.5 Z" fill="#9fc0e8"/><path d="M0.8 13.2 L0.8 4 Q0.8 1.3 3 1.3 L10.5 1.3 Q12.6 1.3 12.6 4 L12.6 13.2 Z M0.8 4 L12.6 4 M5.3 6.8 L8.1 6.8" stroke="#1a5aab" stroke-width="1.3" fill="none" stroke-linejoin="round"/></svg><div class="ab" style="left:656px;top:696px;width:23px;height:23px;background:#cfcfcf;border:2px solid #7d7d7d"></div><svg style="left:660px;top:699px" width="18" height="19"><path d="M1.6 2 L13.2 2 L8.5 8.3 L8.5 12 L5.9 15.8 L5.9 8.3 Z" stroke="#1a5aab" stroke-width="1.5" fill="none" stroke-linejoin="bevel"/><path d="M12.2 15.5 L17.8 15.5 L15 18.5 Z" fill="#1a5aab"/></svg><div class="ab" style="left:680px;top:697px;width:1px;height:21px;background:#cfcfcf"></div><svg style="left:685px;top:699px" width="17" height="17"><path d="M8.5 2 L8.5 15 M2.9 5.25 L14.1 11.75 M14.1 5.25 L2.9 11.75" stroke="#1a5aab" stroke-width="3.3" stroke-linecap="square" fill="none"/><path d="M8.5 2 L8.5 15 M2.9 5.25 L14.1 11.75 M14.1 5.25 L2.9 11.75" stroke="#f0f0f0" stroke-width="1.0" stroke-linecap="butt" fill="none"/></svg><div class="t" style="left:710px;top:701px;color:#1f50ac">0</div><div class="ab" style="left:723px;top:697px;width:1px;height:21px;background:#cfcfcf"></div><div class="t" style="left:730px;top:701px;color:#1f50ac;letter-spacing:-0.25px">Počet záznamů: 118</div><div class="ab" style="left:841px;top:697px;width:1px;height:21px;background:#cfcfcf"></div><div class="ab" style="left:1122px;top:697px;width:1px;height:21px;background:#cfcfcf"></div><svg style="left:1128px;top:700px" width="14" height="16"><path d="M13 1.4 L1.3 1.4 L6.4 7.6 L1.3 13.8 L13 13.8" stroke="#1a5aab" stroke-width="1.4" fill="none"/></svg><div class="ab" style="left:1148px;top:697px;width:1px;height:21px;background:#cfcfcf"></div><svg style="left:1154px;top:700px" width="16" height="16"><path d="M1.5 14.5 L2.5 10.5 L10.5 2.5 Q12 1 13.5 2.5 Q15 4 13.5 5.5 L5.5 13.5 Z M9.5 3.5 L12.5 6.5" stroke="#1a5aab" stroke-width="1.3" fill="none" stroke-linejoin="round"/><path d="M8 14.8 L15 14.8" stroke="#1a5aab" stroke-width="1.5"/></svg><div class="ab" style="left:601px;top:737px;width:17px;height:17px;border:1px solid #0b4da2;background:#fffee6"></div><div class="t" style="left:624px;top:739px;color:#1b54b4;letter-spacing:0.15px">Nefiltrovat mě...</div><div class="ab" style="left:778px;top:737px;width:17px;height:17px;background:#0850a4"></div><svg style="left:778px;top:737px" width="17" height="17"><path d="M3.5 8.5 L7 12 L13.5 5" stroke="#fffde6" stroke-width="2" fill="none"/></svg><div class="t" style="left:801px;top:739px;color:#1b54b4">VF</div><div class="ab" style="left:837px;top:737px;width:17px;height:17px;border:1px solid #0b4da2;background:#fffee6"></div><div class="t" style="left:860px;top:739px;color:#1b54b4">PZ</div><div class="ab" style="left:895px;top:737px;width:17px;height:17px;border:1px solid #0b4da2;background:#fffee6"></div><div class="t" style="left:918px;top:739px;color:#1b54b4">OP</div><div class="ab" style="left:954px;top:737px;width:17px;height:17px;border:1px solid #0b4da2;background:#fffee6"></div><div class="t" style="left:977px;top:739px;color:#1b54b4">PF</div><div class="ab" style="left:1013px;top:737px;width:17px;height:17px;border:1px solid #0b4da2;background:#fffee6"></div><div class="t" style="left:1036px;top:739px;color:#1b54b4">VZ</div><div class="ab" style="left:1072px;top:737px;width:17px;height:17px;border:1px solid #0b4da2;background:#fffee6"></div><div class="t" style="left:1095px;top:739px;color:#1b54b4">OV</div><div class="ab" style="left:1131px;top:737px;width:17px;height:17px;background:#0850a4"></div><svg style="left:1131px;top:737px" width="17" height="17"><path d="M3.5 8.5 L7 12 L13.5 5" stroke="#fffde6" stroke-width="2" fill="none"/></svg><div class="t" style="left:1154px;top:739px;color:#1b54b4">IN</div>
</body></html>
